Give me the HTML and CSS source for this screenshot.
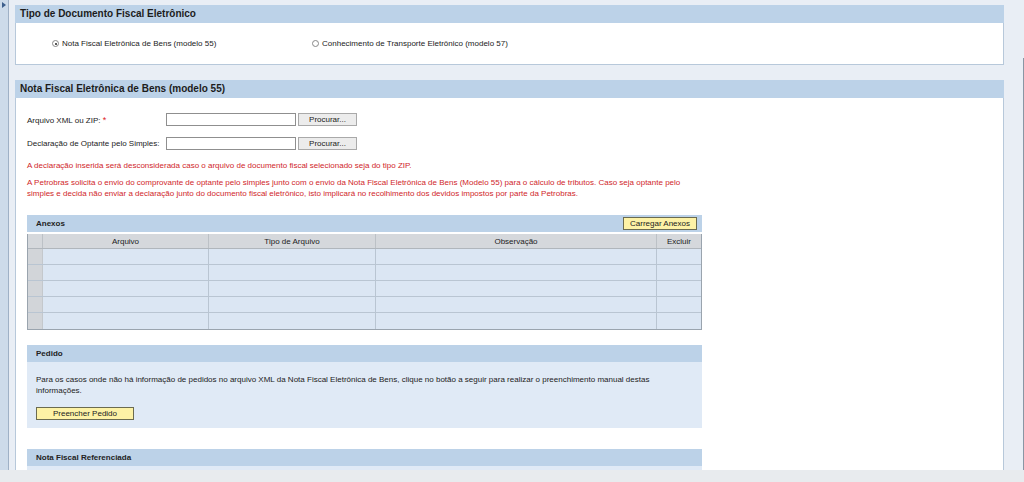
FILE: index.html
```html
<!DOCTYPE html>
<html lang="pt-BR">
<head>
<meta charset="utf-8">
<title>Documento Fiscal Eletrônico</title>
<link rel="stylesheet" href="styles.css">
</head>
<body>
<div class="app">
  <aside class="side"><span class="arrow"></span></aside>
  <main class="main">
    <section class="panel">
      <h2 class="panel-head">Tipo de Documento Fiscal Eletrônico</h2>
      <div class="panel-body radios">
        <label class="radio first"><span class="rb checked"></span>Nota Fiscal Eletrônica de Bens (modelo 55)</label>
        <label class="radio"><span class="rb"></span>Conhecimento de Transporte Eletrônico (modelo 57)</label>
      </div>
    </section>

    <section class="panel panel-main">
      <h2 class="panel-head">Nota Fiscal Eletrônica de Bens (modelo 55)</h2>
      <div class="panel-body form">
        <div class="field">
          <span class="lbl">Arquivo XML ou ZIP: <span class="req">*</span></span>
          <span class="input"></span>
          <button class="btn">Procurar...</button>
        </div>
        <div class="field">
          <span class="lbl">Declaração de Optante pelo Simples:</span>
          <span class="input"></span>
          <button class="btn">Procurar...</button>
        </div>
        <p class="warn one">A declaração inserida será desconsiderada caso o arquivo de documento fiscal selecionado seja do tipo ZIP.</p>
        <p class="warn two">A Petrobras solicita o envio do comprovante de optante pelo simples junto com o envio da Nota Fiscal Eletrônica de Bens (Modelo 55) para o cálculo de tributos. Caso seja optante pelo simples e decida não enviar a declaração junto do documento fiscal eletrônico, isto implicará no recolhimento dos devidos impostos por parte da Petrobras.</p>

        <div class="block anexos">
          <div class="block-head">
            <span>Anexos</span>
            <button class="btn-y small">Carregar Anexos</button>
          </div>
          <div class="grid">
            <div class="row head">
              <span class="sel"></span><span class="c1">Arquivo</span><span class="c2">Tipo de Arquivo</span><span class="c3">Observação</span><span class="c4">Excluir</span>
            </div>
            <div class="row"><span class="sel"></span><span class="c1"></span><span class="c2"></span><span class="c3"></span><span class="c4"></span></div>
            <div class="row"><span class="sel"></span><span class="c1"></span><span class="c2"></span><span class="c3"></span><span class="c4"></span></div>
            <div class="row"><span class="sel"></span><span class="c1"></span><span class="c2"></span><span class="c3"></span><span class="c4"></span></div>
            <div class="row"><span class="sel"></span><span class="c1"></span><span class="c2"></span><span class="c3"></span><span class="c4"></span></div>
            <div class="row"><span class="sel"></span><span class="c1"></span><span class="c2"></span><span class="c3"></span><span class="c4"></span></div>
          </div>
        </div>

        <div class="block pedido">
          <div class="block-head"><span>Pedido</span></div>
          <div class="block-body">
            <p>Para os casos onde não há informação de pedidos no arquivo XML da Nota Fiscal Eletrônica de Bens, clique no botão a seguir para realizar o preenchimento manual destas informações.</p>
            <button class="btn-y wide">Preencher Pedido</button>
          </div>
        </div>

        <div class="block refer">
          <div class="block-head"><span>Nota Fiscal Referenciada</span></div>
          <div class="block-body"></div>
        </div>
      </div>
    </section>
  </main>
  <div class="edge"></div>
</div>
<div class="band"></div>
</body>
</html>
```

FILE: styles.css
```css
* { box-sizing: border-box; }
html, body { margin: 0; padding: 0; }
body {
  background: #e9eef5;
  font-family: "Liberation Sans", Arial, sans-serif;
  font-size: 8px;
  color: #222;
  width: 1024px;
  height: 482px;
  overflow: hidden;
}
.app {
  display: flex;
  height: 470px;
  overflow: hidden;
}
.side {
  width: 9px;
  flex: none;
  background: #cddbea;
  border-right: 1px solid #9fb1c6;
  position: relative;
}
.arrow {
  position: absolute;
  left: 2px;
  top: 2px;
  width: 0;
  height: 0;
  border-top: 3px solid transparent;
  border-bottom: 3px solid transparent;
  border-left: 4px solid #3d5f8c;
}
.main {
  flex: none;
  width: 995px;
  padding: 5px 0 0 6px;
  display: flex;
  flex-direction: column;
  gap: 15px;
}
.edge {
  flex: none;
  width: 20px;
  border-right: 1px solid #8a96a4;
  margin-top: 58px;
  background: #e9eef5;
}
.panel {
  background: #fff;
  border: 1px solid #b7c8da;
  border-top: none;
}
.panel-head {
  height: 18px;
  line-height: 18px;
  background: #bcd2e8;
  padding-left: 5px;
  font-size: 10px;
  font-weight: bold;
  color: #1c1c1c;
  margin: 0 -1px;
}
.radios {
  height: 41px;
  display: flex;
  align-items: center;
  padding-left: 36px;
}
.radio {
  display: flex;
  align-items: center;
  gap: 3px;
}
.radio.first { width: 260px; }
.rb {
  width: 7px;
  height: 7px;
  border-radius: 50%;
  border: 1px solid #888;
  background: #fff;
  position: relative;
}
.rb.checked::after {
  content: "";
  position: absolute;
  left: 1.5px;
  top: 1.5px;
  width: 2px;
  height: 2px;
  border-radius: 50%;
  background: #222;
}
.panel-main { flex: 1; }
.form { padding: 15px 0 0 11px; }
.field {
  display: flex;
  align-items: center;
  height: 13px;
  margin-bottom: 11px;
}
.lbl { width: 139px; }
.req { color: #d22; font-size: 9px; }
.input {
  width: 130px;
  height: 13px;
  border: 1px solid #8f8f8f;
  background: #fff;
}
.btn {
  margin-left: 2px;
  width: 59px;
  height: 13px;
  border: 1px solid #a9a9a9;
  background: #ececec;
  font: inherit;
  color: #222;
  padding: 0;
}
.warn {
  margin: 0;
  color: #d0262a;
  line-height: 11px;
  width: 675px;
}
.warn.one { margin-top: -1px; }
.warn.two { margin-top: 6px; }
.block { width: 675px; }
.anexos { margin-top: 16px; }
.pedido { margin-top: 15px; }
.refer { margin-top: 21px; }
.block-head {
  height: 17px;
  background: #bcd2e8;
  display: flex;
  align-items: center;
  justify-content: space-between;
  padding: 0 5px 0 9px;
  font-weight: bold;
}
.btn-y {
  background: #fdf2a6;
  border: 1px solid #6b6b50;
  font: inherit;
  font-weight: normal;
  color: #222;
  padding: 0;
  height: 13px;
}
.btn-y.small { width: 74px; }
.grid {
  border: 1px solid #9aa4ae;
  border-top: none;
  margin-top: 2px;
}
.row {
  display: flex;
  height: 16px;
  border-bottom: 1px solid #b9c5d2;
}
.row:last-child { border-bottom: none; }
.row span {
  border-right: 1px solid #b9c5d2;
  background: #dbe6f3;
  display: flex;
  align-items: center;
  justify-content: center;
}
.row span:last-child { border-right: none; }
.row .sel { width: 15px; background: #d2d5d9; border-right-color: #c4c8cc; }
.row .c1 { width: 166px; }
.row .c2 { width: 167px; }
.row .c3 { width: 281px; }
.row .c4 { flex: 1; }
.row.head { height: 15px; border-bottom-color: #b0b6bc; }
.row.head span { background: #d5d8dc; border-right-color: #bcc1c6; }
.block-body {
  background: #e0eaf6;
  padding: 12px 9px 8px;
}
.block-body p {
  margin: 0;
  line-height: 11px;
}
.btn-y.wide { width: 98px; margin-top: 11px; display: block; }
.refer .block-body { height: 10px; padding: 0; }
.band {
  height: 12px;
  background: #e8ebee;
}
```
